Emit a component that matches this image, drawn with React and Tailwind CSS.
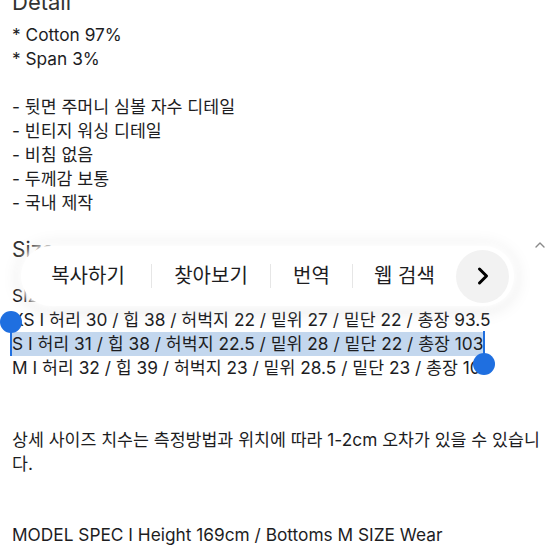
import { ChevronRight } from "lucide-react"

const font = { fontFamily: 'Inter, "Noto Sans CJK KR", sans-serif' }

function Line({ children, className = "" }) {
  return <div className={`h-6 leading-6 text-[17.3px] whitespace-nowrap ${className}`}>{children}</div>
}

function SelectPopup() {
  return (
    <div className="absolute left-[21px] top-[246px] w-[493px] h-[60px] rounded-full bg-white shadow-[0_0_7px_3px_rgba(255,255,255,0.95),0_2px_20px_rgba(0,0,0,0.12)] flex items-center text-[20px] text-[#1d1d1f]">
      <div className="w-[130px] text-center pl-[4px]">복사하기</div>
      <div className="w-px h-[24px] bg-[#e6e6e6]" />
      <div className="w-[118px] text-center">찾아보기</div>
      <div className="w-px h-[24px] bg-[#e6e6e6]" />
      <div className="w-[81px] text-center">번역</div>
      <div className="w-px h-[24px] bg-[#e6e6e6]" />
      <div className="w-[103px] text-center">웹 검색</div>
      <div className="w-[53px] h-[53px] rounded-full bg-[#f2f2f2] flex items-center justify-center">
        <ChevronRight size={28} strokeWidth={2.6} className="text-black" />
      </div>
    </div>
  )
}

export default function App() {
  return (
    <div className="relative w-[555px] h-[555px] overflow-hidden bg-white text-[#1d1d1f]" style={font}>
      <div className="pl-3 -mt-[12px]">
        <div className="h-7 leading-7 text-[22px] text-[#333] mb-[7px]">Detail</div>
        <Line>* Cotton 97%</Line>
        <Line>* Span 3%</Line>
        <Line />
        <Line>- 뒷면 주머니 심볼 자수 디테일</Line>
        <Line>- 빈티지 워싱 디테일</Line>
        <Line>- 비침 없음</Line>
        <Line>- 두께감 보통</Line>
        <Line>- 국내 제작</Line>

        <div className="mt-[21px] h-7 leading-7 text-[21px] text-[#333] flex items-center justify-between pr-[10px]">
          <span>Size</span>
          <svg width="10" height="6" viewBox="0 0 10 6" className="-mt-[10px]">
            <path d="M1 5 L5 1 L9 5" fill="none" stroke="#8a8a8a" strokeWidth="1.4" strokeLinecap="round" strokeLinejoin="round" />
          </svg>
        </div>

        <Line className="mt-[20px]">SIZE (cm)</Line>
        <Line>XS I 허리 30 / 힙 38 / 허벅지 22 / 밑위 27 / 밑단 22 / 총장 93.5</Line>
        <Line>
          <span className="relative inline-block -ml-[2px] pl-[2px] pr-[1px] bg-[#c3d7ee]">
            S I 허리 31 / 힙 38 / 허벅지 22.5 / 밑위 28 / 밑단 22 / 총장 103
            <span className="absolute left-0 -top-[10px] bottom-0 w-[2px] bg-[#1f6fe0]" />
            <span className="absolute -left-[10px] -top-[21px] w-[22px] h-[22px] rounded-full bg-[#1f6fe0]" />
            <span className="absolute -right-[1px] -top-[1px] h-[29px] w-[2px] bg-[#1f6fe0]" />
            <span className="absolute -right-[11px] top-[21px] w-[22px] h-[22px] rounded-full bg-[#1f6fe0]" />
          </span>
        </Line>
        <Line>M I 허리 32 / 힙 39 / 허벅지 23 / 밑위 28.5 / 밑단 23 / 총장 105</Line>

        <Line className="mt-[48px]">상세 사이즈 치수는 측정방법과 위치에 따라 1-2cm 오차가 있을 수 있습니</Line>
        <Line>다.</Line>

        <Line className="mt-[47px]">MODEL SPEC I Height 169cm / Bottoms M SIZE Wear</Line>
      </div>

      <SelectPopup />
    </div>
  )
}
